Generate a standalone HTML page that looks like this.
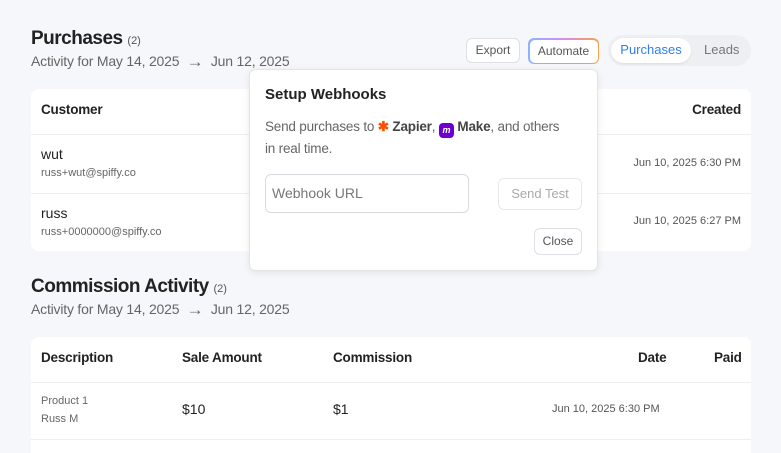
<!DOCTYPE html>
<html><head><style>
*{box-sizing:border-box;margin:0;padding:0}
html,body{width:781px;height:453px;overflow:hidden}
body{background:#f6f7fa;font-family:"Liberation Sans",sans-serif;color:#222;position:relative}
.a{position:absolute;white-space:nowrap}
.card{position:absolute;background:#fff;border-radius:8px;left:31px;width:720px}
.line{position:absolute;left:0;right:0;height:1px;background:#eceef2}
h1{font-size:19px;font-weight:bold;letter-spacing:-0.5px}
h1 small{font-size:11px;font-weight:normal;color:#555;letter-spacing:0}
.sub{font-size:14px;color:#666;letter-spacing:-0.2px}
.arr{font-size:17px;vertical-align:-1px}
.th{font-size:13.5px;font-weight:bold;color:#222;letter-spacing:-0.2px}
.btn{position:absolute;border:1px solid #dde0e5;border-radius:6px;background:#fff;font-size:12px;color:#555;text-align:center}
</style></head><body>
<div class="a" style="left:31px;top:28px"><h1>Purchases <small>(2)</small></h1></div>
<div class="a sub" style="left:31px;top:52px">Activity for May 14, 2025 &nbsp;<span class="arr">→</span>&nbsp; Jun 12, 2025</div>

<div class="btn" style="left:466px;top:38px;width:54px;height:25px;line-height:23px">Export</div>
<div class="a" style="left:528px;top:38px;width:71px;height:26px;border-radius:6px;background:linear-gradient(90deg,#8ab4ff,#d58cf0,#f7a14a);padding:1.5px"><div style="background:#fff;border-radius:5px;height:100%;font-size:12px;color:#555;text-align:center;line-height:23px">Automate</div></div>
<div class="a" style="left:608px;top:35px;width:143px;height:31px;border-radius:16px;background:#eeeff2"></div>
<div class="a" style="left:611px;top:38px;width:80px;height:25px;border-radius:13px;background:#fff;box-shadow:0 1px 2px rgba(0,0,0,.08);color:#2f7ff0;font-size:13px;text-align:center;line-height:24px">Purchases</div>
<div class="a" style="left:704px;top:42px;font-size:13px;color:#777">Leads</div>

<div class="card" style="top:89px;height:162px">
  <div class="a th" style="left:10px;top:13px">Customer</div>
  <div class="a th" style="right:10px;top:13px">Created</div>
  <div class="line" style="top:45px"></div>
  <div class="a" style="left:10px;top:57px;font-size:14px">wut</div>
  <div class="a" style="left:10px;top:78px;font-size:11px;color:#666">russ+wut@spiffy.co</div>
  <div class="a" style="right:10px;top:68px;font-size:11px;color:#555">Jun 10, 2025 6:30 PM</div>
  <div class="line" style="top:104px"></div>
  <div class="a" style="left:10px;top:116px;font-size:14px">russ</div>
  <div class="a" style="left:10px;top:137px;font-size:11px;color:#666">russ+0000000@spiffy.co</div>
  <div class="a" style="right:10px;top:126px;font-size:11px;color:#555">Jun 10, 2025 6:27 PM</div>
</div>

<div class="a" style="left:31px;top:276px"><h1>Commission Activity <small>(2)</small></h1></div>
<div class="a sub" style="left:31px;top:300px">Activity for May 14, 2025 &nbsp;<span class="arr">→</span>&nbsp; Jun 12, 2025</div>

<div class="card" style="top:337px;height:130px">
  <div class="a th" style="left:10px;top:13px">Description</div>
  <div class="a th" style="left:151px;top:13px">Sale Amount</div>
  <div class="a th" style="left:302px;top:13px">Commission</div>
  <div class="a th" style="left:607px;top:13px">Date</div>
  <div class="a th" style="left:683px;top:13px">Paid</div>
  <div class="line" style="top:45px"></div>
  <div class="a" style="left:10px;top:58px;font-size:11px;color:#666">Product 1</div>
  <div class="a" style="left:10px;top:76px;font-size:11px;color:#666">Russ M</div>
  <div class="a" style="left:151px;top:64px;font-size:14px">$10</div>
  <div class="a" style="left:302px;top:64px;font-size:14px">$1</div>
  <div class="a" style="left:521px;top:66px;font-size:11px;color:#555">Jun 10, 2025 6:30 PM</div>
  <div class="line" style="top:102px"></div>
</div>

<div class="a" style="left:249px;top:69px;width:349px;height:202px;background:#fff;border:1px solid #e2e4e8;border-radius:6px;box-shadow:0 2px 8px rgba(0,0,0,.08)">
  <div class="a" style="left:15px;top:16px;font-size:15px;font-weight:bold">Setup Webhooks</div>
  <div class="a" style="left:15px;top:46px;font-size:13.5px;color:#666;line-height:21px;letter-spacing:-0.2px">Send purchases to <span style="color:#ff4f00;font-weight:bold">✱</span> <b style="color:#444">Zapier</b>, <span style="display:inline-block;width:15px;height:15px;border-radius:4px;background:#6d00cc;vertical-align:-2px;color:#fff;font-size:9px;text-align:center;line-height:15px;font-weight:bold;font-style:italic">m</span> <b style="color:#444">Make</b>, and others<br>in real time.</div>
  <div class="a" style="left:15px;top:104px;width:204px;height:39px;border:1px solid #d8dbe0;border-radius:6px;font-size:14px;color:#777;padding:10px 6px">Webhook URL</div>
  <div class="btn" style="left:248px;top:108px;width:84px;height:32px;line-height:30px;font-size:13px;color:#aaa;border-color:#e6e8ec">Send Test</div>
  <div class="btn" style="left:284px;top:158px;width:48px;height:27px;line-height:25px;color:#555">Close</div>
</div>
</body></html>
